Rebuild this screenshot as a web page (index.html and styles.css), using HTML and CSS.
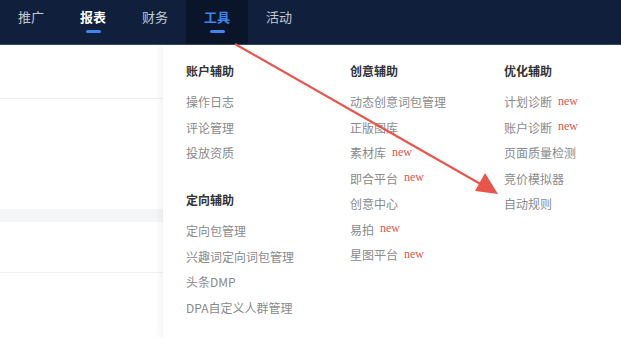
FILE: index.html
```html
<!DOCTYPE html>
<html lang="zh">
<head>
<meta charset="utf-8">
<link rel="stylesheet" href="styles.css">
</head>
<body>
<header class="nav">
  <div class="tab">推广</div>
  <div class="tab bold">报表<span class="bar"></span></div>
  <div class="tab">财务</div>
  <div class="tab active">工具<span class="bar"></span></div>
  <div class="tab">活动</div>
</header>
<main class="page">
  <section class="bg">
    <div class="bg-top"></div>
    <div class="bg-mid"></div>
    <div class="bg-band"></div>
    <div class="bg-low"></div>
  </section>
  <section class="menu">
    <div class="col c1">
      <div class="head">账户辅助</div>
      <div class="item">操作日志</div>
      <div class="item">评论管理</div>
      <div class="item">投放资质</div>
      <div class="head sec">定向辅助</div>
      <div class="item">定向包管理</div>
      <div class="item">兴趣词定向词包管理</div>
      <div class="item">头条DMP</div>
      <div class="item">DPA自定义人群管理</div>
    </div>
    <div class="col c2">
      <div class="head">创意辅助</div>
      <div class="item">动态创意词包管理</div>
      <div class="item">正版图库</div>
      <div class="item">素材库<span class="new">new</span></div>
      <div class="item">即合平台<span class="new">new</span></div>
      <div class="item">创意中心</div>
      <div class="item">易拍<span class="new">new</span></div>
      <div class="item">星图平台<span class="new">new</span></div>
    </div>
    <div class="col c3">
      <div class="head">优化辅助</div>
      <div class="item">计划诊断<span class="new">new</span></div>
      <div class="item">账户诊断<span class="new">new</span></div>
      <div class="item">页面质量检测</div>
      <div class="item">竞价模拟器</div>
      <div class="item">自动规则</div>
    </div>
  </section>
</main>
<svg class="arrow" width="621" height="338" viewBox="0 0 621 338">
  <line x1="235" y1="44" x2="484" y2="186" stroke="#e8554d" stroke-width="2.2"/>
  <polygon points="498,194 475,191 485,173" fill="#e8554d"/>
</svg>
</body>
</html>
```
FILE: styles.css
```css
* { box-sizing: border-box; }
html, body { margin: 0; padding: 0; }
body {
  width: 621px;
  height: 338px;
  overflow: hidden;
  background: #fff;
  font-family: "Noto Sans CJK SC", "Noto Sans", sans-serif;
  position: relative;
}
.nav {
  height: 45px;
  background: #10203c;
  border-bottom: 1px solid #3c4a60;
  display: flex;
}
.tab {
  width: 62px;
  height: 44px;
  position: relative;
  text-align: center;
  font-size: 13px;
  line-height: 34px;
  color: #c3c8d1;
}
.tab.bold { color: #fff; font-weight: 700; }
.tab.active { background: #0a1529; color: #3e86f0; font-weight: 700; }
.bar {
  position: absolute;
  left: 24px;
  top: 30px;
  width: 15px;
  height: 3px;
  border-radius: 2px;
  background: #3e86f0;
}
.page {
  display: flex;
  height: 293px;
}
.bg {
  width: 163px;
  display: flex;
  flex-direction: column;
}
.bg-top { height: 54px; border-bottom: 1px solid #eeeff1; }
.bg-mid { height: 110px; }
.bg-band { height: 13px; background: #f4f5f7; }
.bg-low { height: 51px; border-bottom: 1px solid #eeeff1; }
.menu {
  flex: 1;
  background: #fff;
  box-shadow: -3px 0 6px rgba(0, 0, 0, 0.05);
  display: flex;
  padding: 13px 0 0 23px;
}
.col { display: flex; flex-direction: column; }
.c1 { width: 164px; }
.c2 { width: 154px; }
.head {
  font-size: 12px;
  line-height: 25.5px;
  height: 25.5px;
  font-weight: 700;
  color: #333;
  margin-bottom: 5.5px;
}
.head.sec { margin-top: 21.5px; }
.item {
  font-size: 12px;
  line-height: 25.5px;
  height: 25.5px;
  color: #8a8a8a;
  white-space: nowrap;
  display: flex;
  align-items: center;
}
.new {
  font-family: "Liberation Serif", "DejaVu Serif", serif;
  color: #e0544c;
  font-size: 12px;
  line-height: 1;
  margin-left: 6px;
  position: relative;
  top: -1px;
}
.arrow {
  position: absolute;
  left: 0;
  top: 0;
  pointer-events: none;
}
```
